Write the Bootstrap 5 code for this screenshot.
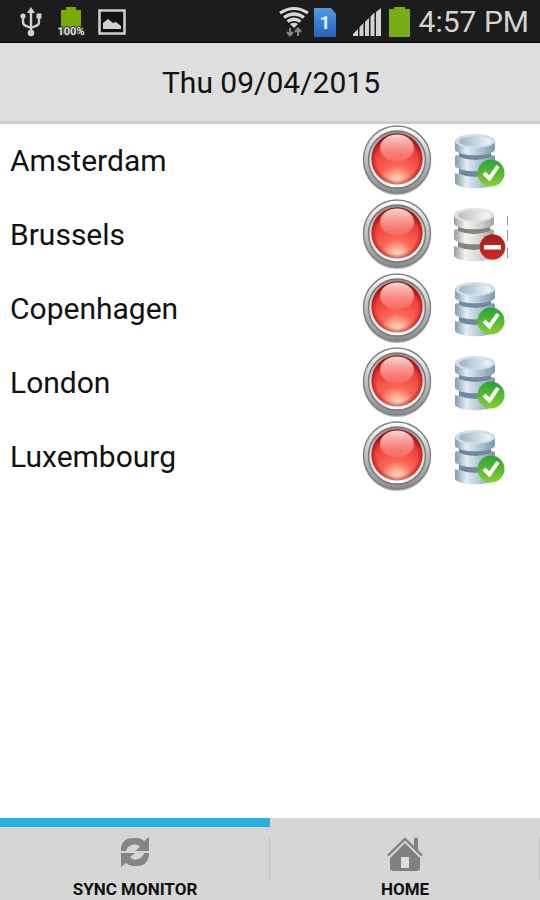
<!DOCTYPE html>
<html lang="en">
<head>
<meta charset="utf-8">
<meta name="viewport" content="width=device-width, initial-scale=1">
<title>Sync Monitor</title>
<link rel="stylesheet" href="https://cdn.jsdelivr.net/npm/bootstrap@5.3.0/dist/css/bootstrap.min.css">
<style>
body { font-family: Roboto, "Noto Sans", sans-serif; color: #111; background: #fff; }
svg { display: block; flex: none; }
.status-bar { height: 43px; background: #1c1c1c; border-bottom: 1px solid #050505; color: #d4d4d4; padding: 2px 11px 0 20px; }
.clock { font-size: 30px; line-height: 36px; margin-left: 9px; }
.title-bar { height: 81px; background: #dedede; border-bottom: 3px solid #cdcdcd; padding: 2px 0 0 2px; font-size: 30px; line-height: 36px; }
.site-row { min-height: 74px; padding: 0 31px 0 10px; font-size: 30px; line-height: 36px; }
.site-icons { gap: 20px; }
.tab-bar { background: #d6d6d6; }
.tab-item { height: 82px; padding: 9px 0 0; border: 0; border-top: 9px solid #d6d6d6; background: none; color: #111; font-size: 17px; line-height: 20px; font-weight: 700; }
.tab-item.active { border-top-color: #28b1e1; }
.tab-item svg { margin-bottom: 7px; }
.tab-rule { width: 1px; height: 43px; background: #c4c4c4; margin: 19px 0 0 -1px; }
</style>
<script src="https://cdn.jsdelivr.net/npm/bootstrap@5.3.0/dist/js/bootstrap.bundle.min.js"></script>
</head>
<body class="d-flex flex-column min-vh-100">

<svg width="0" height="0" class="position-absolute" aria-hidden="true">
  <defs>
    <linearGradient id="rim" x1="0" y1="0" x2="0" y2="1"><stop offset="0" stop-color="#fff"/><stop offset=".45" stop-color="#c4c4c4"/><stop offset="1" stop-color="#8b8b8b"/></linearGradient>
    <linearGradient id="rimIn" x1="0" y1="0" x2="0" y2="1"><stop offset="0" stop-color="#8d8d8d"/><stop offset=".5" stop-color="#d6d6d6"/><stop offset="1" stop-color="#fff"/></linearGradient>
    <radialGradient id="redBody" cx=".5" cy=".98" r=".98"><stop offset="0" stop-color="#fff0d8"/><stop offset=".16" stop-color="#ffb9a0"/><stop offset=".36" stop-color="#fc6656"/><stop offset=".75" stop-color="#ea3c38"/><stop offset="1" stop-color="#8d0b0a"/></radialGradient>
    <radialGradient id="redEdge"><stop offset=".8" stop-color="#a30808" stop-opacity="0"/><stop offset="1" stop-color="#a30808" stop-opacity=".6"/></radialGradient>
    <linearGradient id="shine" x1="0" y1="0" x2="0" y2="1"><stop offset="0" stop-color="#ffd9d5"/><stop offset="1" stop-color="#f9736b" stop-opacity=".6"/></linearGradient>
    <linearGradient id="blueSide"><stop offset="0" stop-color="#819aaa"/><stop offset=".28" stop-color="#e2edf3"/><stop offset=".6" stop-color="#b2c8d6"/><stop offset="1" stop-color="#7c98aa"/></linearGradient>
    <linearGradient id="blueTop"><stop offset="0" stop-color="#9bb4c4"/><stop offset="1" stop-color="#eef6fa"/></linearGradient>
    <linearGradient id="graySide"><stop offset="0" stop-color="#9b9b99"/><stop offset=".28" stop-color="#f3f3f1"/><stop offset=".6" stop-color="#d9d9d7"/><stop offset="1" stop-color="#a3a3a1"/></linearGradient>
    <linearGradient id="grayTop"><stop offset="0" stop-color="#bdbdbb"/><stop offset="1" stop-color="#fafafa"/></linearGradient>
    <linearGradient id="okFill" x1="0" y1="0" x2="0" y2="1"><stop offset="0" stop-color="#29a23a"/><stop offset="1" stop-color="#86d02d"/></linearGradient>
    <linearGradient id="stopFill" x1="0" y1="0" x2="0" y2="1"><stop offset="0" stop-color="#a61d1c"/><stop offset="1" stop-color="#d02724"/></linearGradient>
    <linearGradient id="simFill" x1="0" y1="0" x2="0" y2="1"><stop offset="0" stop-color="#4f9ae2"/><stop offset="1" stop-color="#2862bd"/></linearGradient>
  </defs>
  <symbol id="led" viewBox="0 0 70 72">
    <ellipse cx="35" cy="36" rx="34" ry="34" fill="#777" opacity=".55"/>
    <circle cx="35" cy="34.5" r="33.5" fill="url(#rim)" stroke="#808080" stroke-width="1.4"/>
    <circle cx="35" cy="34.5" r="28.5" fill="url(#rimIn)" stroke="#777" stroke-width="1.4"/>
    <circle cx="35" cy="34" r="25.5" fill="url(#redBody)"/>
    <circle cx="35" cy="34" r="25.5" fill="url(#redEdge)"/>
    <ellipse cx="35" cy="23" rx="17" ry="13.5" fill="url(#shine)"/>
  </symbol>
  <symbol id="dbOk" viewBox="0 0 56 56">
    <g fill="url(#blueSide)">
      <path d="M2 40V50C6 57 38 57 42 50V40Q22 47 2 40Z"/>
      <path d="M6 32h32v9q-16 6-32 0Z" fill="#71899a"/>
      <path d="M2 24Q2 22 6 22H38Q42 22 42 24V33C38 40 6 40 2 33Z"/>
      <path d="M6 15h32v9q-16 6-32 0Z" fill="#71899a"/>
      <path d="M2 8V17C6 24 38 24 42 17V8Z"/>
    </g>
    <ellipse cx="22" cy="8" rx="20" ry="7" fill="#cfdfe8"/><ellipse cx="22" cy="8.400" rx="16" ry="5" fill="url(#blueTop)"/>
    <circle cx="38" cy="40" r="13.5" fill="url(#okFill)"/>
    <path d="M31 40l5.500 5.500L45 33" fill="none" stroke="#fff" stroke-width="4"/>
  </symbol>
  <symbol id="dbStop" viewBox="0 0 56 56">
    <g fill="url(#graySide)">
      <path d="M1 39V49C5 56 37 56 41 49V39Q21 46 1 39Z"/>
      <path d="M5 31h32v9q-16 6-32 0Z" fill="#83837f"/>
      <path d="M1 24Q1 22 5 22H37Q41 22 41 24V32C37 39 5 39 1 32Z"/>
      <path d="M5 15h32v9q-16 6-32 0Z" fill="#83837f"/>
      <path d="M1 8V17C5 24 37 24 41 17V8Z"/>
    </g>
    <ellipse cx="21" cy="8" rx="20" ry="7" fill="#e2e2e0"/><ellipse cx="21" cy="8.400" rx="16" ry="5" fill="url(#grayTop)"/>
    <circle cx="39.500" cy="40" r="12.8" fill="url(#stopFill)"/>
    <rect x="31" y="38" width="17" height="4.500" fill="#fff"/>
    <path d="M54.500 9v9M54.500 23v11M54.500 41v10" stroke="#999" stroke-width="1"/>
  </symbol>
</svg>

<header>
  <div class="status-bar d-flex align-items-center justify-content-between">
    <div class="d-flex align-items-center">
      <svg width="22" height="30" viewBox="0 0 22 30" role="img" aria-label="USB connected" fill="none" stroke="#d0d0d0" stroke-width="2.400"><path d="M11 4v22M3 10v5q0 3 3 4l5 2M19 10v5q0 3-3 4l-5 2"/><path d="M11 0l4 6H7Z" fill="#d0d0d0" stroke="none"/><circle cx="3" cy="9" r="2.600" fill="#d0d0d0" stroke="none"/><path d="M16.500 6.500h5v5h-5z" fill="#d0d0d0" stroke="none"/><circle cx="11" cy="26" r="3.300" fill="#d0d0d0" stroke="none"/></svg>
      <svg class="ms-3" width="28" height="30" viewBox="0 0 28 30" role="img" aria-label="Battery 100%"><path d="M3 3h5V0h10v3h5v24H3Z" fill="#78ab08"/><text x="13" y="28" text-anchor="middle" font-size="11" font-weight="700" fill="#ddd" stroke="#333" stroke-width="2" paint-order="stroke">100%</text></svg>
      <svg class="ms-2 ps-1" width="32" height="26" viewBox="0 0 28 26" role="img" aria-label="Screenshot saved"><path d="M1.500 1.500h25v23h-25z" fill="#111" stroke="#ccc" stroke-width="2.600"/><path d="M5 20v-6l5-4 5 4 3-1 5 4v3Z" fill="#d0d0d0"/></svg>
    </div>
    <div class="d-flex align-items-center">
      <svg width="30" height="32" viewBox="0 0 30 32" role="img" aria-label="Wi-Fi" fill="none" stroke="#d8d8d8" stroke-width="3.200"><path d="M1 7Q15-2 29 7M5 11.500Q15 4.500 25 11.500M8.500 15.500Q15 11 21.500 15.500"/><path d="M11 18q4-2.500 8 0l-4 4Z" fill="#d8d8d8" stroke="none"/><path d="M11 22v7M8 26l3 3.500 3-3.500M19 30v-7M16 26l3-3.500 3 3.500" stroke="#888" stroke-width="2"/></svg>
      <svg class="ms-1" width="24" height="29" viewBox="0 0 24 29" role="img" aria-label="SIM 1"><path d="M1 0h17l5 6v23H1Z" fill="url(#simFill)"/><text x="12" y="21" text-anchor="middle" font-size="19" font-weight="700" fill="#e6eefb">1</text></svg>
      <svg class="ms-3" width="28" height="28" viewBox="0 0 28 28" role="img" aria-label="Signal strength" fill="#d2d2d2"><path d="M0 28v-2l5-5v7ZM6.500 28v-9l4-4v13ZM12 28V14l4-4v18ZM17.500 28V8.500l4-4V28ZM23 28V4l5-4v28Z"/></svg>
      <svg class="ms-2" width="21" height="30" viewBox="0 0 21 30" role="img" aria-label="Battery full"><path d="M0 2h5V0h11v2h5v28H0Z" fill="#78ab18"/></svg>
      <span class="clock">4:57 PM</span>
    </div>
  </div>
  <h1 class="title-bar d-flex align-items-center justify-content-center fw-normal m-0">Thu 09/04/2015</h1>
</header>

<main class="flex-grow-1">
  <ul class="list-unstyled m-0">
    <li class="site-row d-flex align-items-center justify-content-between"><span>Amsterdam</span><span class="site-icons d-flex align-items-center"><svg width="72" height="72" role="img" aria-label="Red light"><use href="#led"/></svg><svg width="56" height="56" role="img" aria-label="Database synced"><use href="#dbOk"/></svg></span></li>
    <li class="site-row d-flex align-items-center justify-content-between"><span>Brussels</span><span class="site-icons d-flex align-items-center"><svg width="72" height="72" role="img" aria-label="Red light"><use href="#led"/></svg><svg width="56" height="56" role="img" aria-label="Database not synced"><use href="#dbStop"/></svg></span></li>
    <li class="site-row d-flex align-items-center justify-content-between"><span>Copenhagen</span><span class="site-icons d-flex align-items-center"><svg width="72" height="72" role="img" aria-label="Red light"><use href="#led"/></svg><svg width="56" height="56" role="img" aria-label="Database synced"><use href="#dbOk"/></svg></span></li>
    <li class="site-row d-flex align-items-center justify-content-between"><span>London</span><span class="site-icons d-flex align-items-center"><svg width="72" height="72" role="img" aria-label="Red light"><use href="#led"/></svg><svg width="56" height="56" role="img" aria-label="Database synced"><use href="#dbOk"/></svg></span></li>
    <li class="site-row d-flex align-items-center justify-content-between"><span>Luxembourg</span><span class="site-icons d-flex align-items-center"><svg width="72" height="72" role="img" aria-label="Red light"><use href="#led"/></svg><svg width="56" height="56" role="img" aria-label="Database synced"><use href="#dbOk"/></svg></span></li>
  </ul>
</main>

<nav class="tab-bar d-flex" aria-label="Sections">
  <button type="button" class="tab-item active flex-fill w-50 d-flex flex-column align-items-center" aria-current="page">
    <svg width="32" height="36" viewBox="0 0 32 36" fill="#868686" aria-hidden="true"><path d="M2 15V11Q4 2 14 2h4q4 0 7 3l5-4v14H16l5-4q-3-4-8-2-5 1-6 6Z"/><path d="M30 17V20q-2 10-12 10h-4q-4 0-7-3l-5 4V17h14l-5 4q3 4 8 2 5-1 6-6Z"/></svg>
    SYNC MONITOR
  </button>
  <span class="tab-rule"></span>
  <button type="button" class="tab-item flex-fill w-50 d-flex flex-column align-items-center">
    <svg width="36" height="36" viewBox="0 0 36 36" fill="#808080" aria-hidden="true"><path d="M3 18v14q0 3 3 3h24q3 0 3-3V18L18 6Z"/><path d="M1 20L18 3l17 17" fill="none" stroke="#d6d6d6" stroke-width="6"/><path d="M27 2h4v15l-4-4Z"/><path d="M1 19.500L18 3l17 16.500" fill="none" stroke="#808080" stroke-width="2.400"/><path d="M14 21h8v11h-8Z" fill="#dedede"/></svg>
    HOME
  </button>
  <span class="tab-rule"></span>
</nav>
</body>
</html>
